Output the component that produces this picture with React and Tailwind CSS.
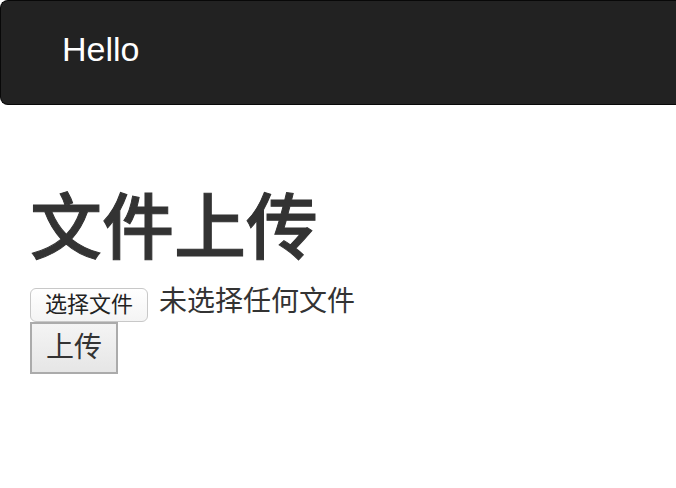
export default function App() {
  const cjk = { fontFamily: '"Liberation Sans", "Noto Sans CJK SC", sans-serif' };
  return (
    <div className="w-full h-[488px] bg-white overflow-hidden" style={cjk}>
      <div className="h-[105px] bg-[#222222] border border-[#080808] border-r-0 rounded-l-[8px] flex items-center pl-[61px] pb-[7px]">
        <span className="text-[34px] leading-none text-white">Hello</span>
      </div>
      <div className="pl-[30px]">
        <h1 className="mt-[87px] text-[72px] leading-[72px] font-medium text-[#333333] [-webkit-text-stroke:1px_#333333]">文件上传</h1>
        <div className="mt-[24px] flex items-start">
          <button className="h-[34px] w-[118px] rounded-[6px] border border-[#c8c8c8] bg-gradient-to-b from-white to-[#f4f4f4] text-[22px] leading-none text-[#222] flex items-center justify-center pb-[1px]">
            选择文件
          </button>
          <span className="ml-[11px] text-[28px] leading-[30px] text-[#333333] -mt-[1px]">未选择任何文件</span>
        </div>
        <button className="h-[52px] w-[88px] border-2 border-[#ababab] bg-gradient-to-b from-[#f4f4f4] to-[#e6e6e6] text-[28px] leading-none text-[#333333] flex items-center justify-center">
          上传
        </button>
      </div>
    </div>
  );
}
